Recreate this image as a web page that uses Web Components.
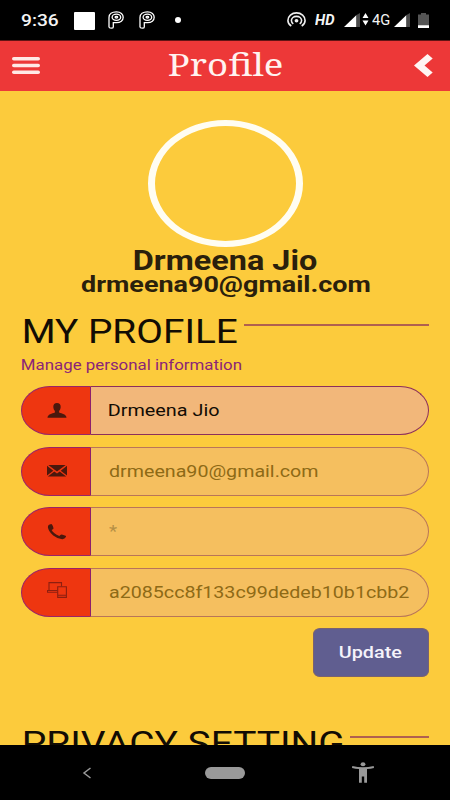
<!DOCTYPE html>
<html lang="en">
<head>
<meta charset="utf-8">
<title>Profile</title>
<style>
  html, body {
    margin: 0;
    height: 100%;
  }
  body {
    background: #fccb3c;
    font-family: Roboto, "Liberation Sans", sans-serif;
    overflow: hidden;
  }
</style>
</head>
<body>
<profile-app></profile-app>

<script>
/**
 * FitText - one line of text, scaled horizontally so that its visible
 * glyphs span exactly `width` pixels
 */
class FitText extends HTMLElement {
  constructor() {
    super();
    this.attachShadow({ mode: 'open' });
    this.shadowRoot.innerHTML = `
      <style>
        :host {
          display: block;
          flex: none;
          text-align: left;
          white-space: nowrap;
        }
        span {
          display: inline-block;
          vertical-align: top;
          transform-origin: 0 50%;
        }
      </style>
      <span><slot></slot></span>
    `;
  }

  connectedCallback() {
    const target = parseFloat(this.getAttribute('width'));
    const css = getComputedStyle(this);
    const ctx = document.createElement('canvas').getContext('2d');
    ctx.font = `${css.fontStyle} ${css.fontWeight} ${css.fontSize} ${css.fontFamily}`;

    const m = ctx.measureText(this.textContent);
    const ink = m.actualBoundingBoxRight + m.actualBoundingBoxLeft;
    const scale = target / ink;
    const span = this.shadowRoot.querySelector('span');

    this.style.width = `${target}px`;
    span.style.transform = `translateX(${m.actualBoundingBoxLeft * scale}px) scaleX(${scale})`;
  }
}

/**
 * StatusBar - clock, notification icons and signal icons
 */
class StatusBar extends HTMLElement {
  constructor() {
    super();
    this.attachShadow({ mode: 'open' });
    this.shadowRoot.innerHTML = `
      <style>
        :host {
          display: flex;
          align-items: center;
          box-sizing: border-box;
          height: 40px;
          padding: 0 21px;
          background: #000;
          color: #f4f4f4;
        }
        svg {
          display: block;
          flex: none;
        }
        .time {
          font-size: 17px;
          font-weight: 500;
          line-height: 42px;
        }
        .square {
          width: 21px;
          height: 18px;
          margin: 1px 13px 0 16px;
          border-radius: 1px;
          background: #fff;
        }
        .p {
          margin-right: 15px;
        }
        .dot {
          width: 6px;
          height: 6px;
          margin-left: 5px;
          border-radius: 50%;
          background: #fff;
        }
        .right {
          display: flex;
          align-items: center;
          margin-left: auto;
        }
        .hd {
          margin: 0 9px 0 9px;
          font-size: 15px;
          font-weight: 700;
          font-style: italic;
          line-height: 41px;
        }
        .net {
          margin: 0 4px 0 3px;
          font-size: 15px;
          line-height: 41px;
        }
        .battery {
          margin-left: 8px;
        }
      </style>
      <fit-text class="time" width="37">9:36</fit-text>
      <div class="square"></div>
      <svg class="p" width="16" height="18" viewBox="0 0 16 18" fill="none" stroke="#fff" stroke-width="1.3">
        <path d="M1 16V6.500C1 3 4 .9 8.400.9s6.800 2.200 6.800 5.400-2.700 5.400-6.800 5.400H5.300V16q0 1.200-2.100 1.200T1 16z"/>
        <ellipse cx="8.400" cy="6.300" rx="4.300" ry="3.100"/>
        <ellipse cx="8.400" cy="6.300" rx="1.300" ry=".8"/>
      </svg>
      <svg class="p" width="16" height="18" viewBox="0 0 16 18" fill="none" stroke="#fff" stroke-width="1.3">
        <path d="M1 16V6.500C1 3 4 .9 8.400.9s6.800 2.200 6.800 5.400-2.700 5.400-6.800 5.400H5.300V16q0 1.200-2.100 1.200T1 16z"/>
        <ellipse cx="8.400" cy="6.300" rx="4.300" ry="3.100"/>
        <ellipse cx="8.400" cy="6.300" rx="1.300" ry=".8"/>
      </svg>
      <div class="dot"></div>
      <div class="right">
        <svg width="19" height="16" viewBox="0 0 19 16" fill="none" stroke="#eee" stroke-width="1.600">
          <path d="M4.300 14C2.200 12.700.9 10.700.9 8.500.9 4.300 4.700.9 9.500.9s8.600 3.400 8.600 7.600c0 2.200-1.300 4.200-3.400 5.500"/>
          <path d="M6.300 11.800C5.100 11 4.400 9.900 4.400 8.600c0-2.300 2.300-4.200 5.100-4.200s5.100 1.900 5.100 4.200c0 1.300-.7 2.400-1.900 3.200"/>
          <ellipse cx="9.500" cy="8.800" rx="1.900" ry="1.700" fill="#eee" stroke="none"/>
        </svg>
        <fit-text class="hd" width="20">HD</fit-text>
        <svg width="16" height="14" viewBox="0 0 16 14">
          <path d="M0 14L12.500 2V14z" fill="#fff"/>
          <path d="M12.500 2L16 0V14H12.500z" fill="#4a4a4a"/>
        </svg>
        <svg width="7" height="13" viewBox="0 0 7 13" fill="#fff" style="margin: 0 0 2px 2px">
          <path d="M3.500 0L6.500 5H.5zM3.500 12.500L.5 7.500H6.500z"/>
        </svg>
        <fit-text class="net" width="18">4G</fit-text>
        <svg width="16" height="14" viewBox="0 0 16 14">
          <path d="M0 14L12.500 2V14z" fill="#fff"/>
          <path d="M12.500 2L16 0V14H12.500z" fill="#4a4a4a"/>
        </svg>
        <svg class="battery" width="11" height="15" viewBox="0 0 11 15">
          <path d="M3 0h5v1.500h3V12.500H0V1.500h3z" fill="#555"/>
          <path d="M0 12.200H11V15H0z" fill="#fff"/>
        </svg>
      </div>
    `;
  }
}

/**
 * AppHeader - red title bar with menu and back buttons
 */
class AppHeader extends HTMLElement {
  constructor() {
    super();
    this.attachShadow({ mode: 'open' });
    this.shadowRoot.innerHTML = `
      <style>
        :host {
          display: grid;
          grid-template-columns: 1fr auto 1fr;
          align-items: center;
          box-sizing: border-box;
          height: 51px;
          padding: 0 17px 0 12px;
          border-top: 1px solid #611414;
          background: #ed3838;
          color: #fff3f0;
        }
        svg {
          display: block;
        }
        .menu {
          margin-bottom: 2px;
        }
        .title {
          margin: 0 0 3px 5px;
          font-family: "Noto Serif", "DejaVu Serif", serif;
          font-size: 30px;
          line-height: 47px;
        }
        .back {
          justify-self: end;
          margin-bottom: 2px;
        }
      </style>
      <svg class="menu" width="28" height="17" viewBox="0 0 28 17" fill="#ffe9e6">
        <rect width="28" height="3.600" rx="1.800"/>
        <rect y="6.700" width="28" height="3.600" rx="1.800"/>
        <rect y="13.400" width="28" height="3.600" rx="1.800"/>
      </svg>
      <fit-text class="title" width="113">${this.getAttribute('label')}</fit-text>
      <svg class="back" width="19" height="23" viewBox="0 0 19 23">
        <path d="M13.500 0L18.700 4.500 10.500 11.500 18.700 18.500 13.500 23 0 11.500z" fill="#fff5f3"/>
      </svg>
    `;
  }
}

/**
 * SectionHeading - big title followed by a rule that fills the row
 */
class SectionHeading extends HTMLElement {
  constructor() {
    super();
    this.attachShadow({ mode: 'open' });
    this.shadowRoot.innerHTML = `
      <style>
        :host {
          display: flex;
          gap: 7px;
          height: 34px;
          padding-left: 3px;
          color: #120c04;
          font-size: 33px;
          line-height: 34px;
        }
        hr {
          flex: 1;
          height: 2px;
          margin: 9px 0 0;
          border: 0;
          background: #b0604f;
        }
      </style>
      <slot></slot>
      <hr>
    `;
  }
}

const ICONS = {
  user: `<path d="M10 0c2.400 0 3.800 1.600 3.700 4-.1 1.900-.9 3.200-1.600 4.100v1.500c2.800 1 7.400 1.900 7.400 5.200H.5C.5 11.500 5.100 10.600 7.900 9.600V8.100C7.200 7.200 6.400 5.900 6.300 4 6.200 1.600 7.600 0 10 0z"/>`,
  mail: `<path d="M1.300 2H18.700L10 8.500zM0 2.800L6.300 7.700 0 12.400zM20 2.800L13.700 7.700 20 12.400zM7.300 8.500L10 10.500 12.700 8.500 19.200 13.400H.8z"/>`,
  phone: `<path d="M2 .7L4.300 0Q5 .1 5.700 1.800T6.500 4.400Q6.300 5 4.600 6.100 6.500 9.600 12.300 12 14 10.600 14.800 10.600L18.600 11.800Q19.300 12.200 18.900 13.100 17.700 15.300 15.200 15.200 10.700 15 6.200 11.500 1.400 7.500.9 3.300.8 1.600 2 .7z"/>`,
  devices: `<g fill="none" stroke="#8d1f10" stroke-width="1.100"><path d="M10.500 8.500H2V.6H14.500V4.500M10.500 8.500H.5V10.300H10.500"/><path d="M10.700 4.800H19.400V15.400H10.700zM10.700 13.200H19.400"/></g>`
};

/**
 * ProfileField - pill-shaped input with an icon on its left
 */
class ProfileField extends HTMLElement {
  constructor() {
    super();
    this.attachShadow({ mode: 'open' });
    this.shadowRoot.innerHTML = `
      <style>
        :host {
          display: flex;
          height: 49px;
          line-height: 48px;
          font-size: 16.500px;
          color: #8e6a16;
        }
        .icon {
          display: flex;
          align-items: center;
          justify-content: center;
          box-sizing: border-box;
          width: 70px;
          padding-left: 1px;
          border: 1px solid #9a2468;
          border-right: 1.500px solid #8c1e6c;
          border-radius: 29px 0 0 29px / 24.500px 0 0 24.500px;
          background: #ee3610;
        }
        svg {
          display: block;
          fill: #4b180d;
        }
        .value {
          display: flex;
          flex: 1;
          box-sizing: border-box;
          padding-left: 17.500px;
          border: 1px solid #b97559;
          border-left: 0;
          border-radius: 0 29px 29px 0 / 0 24.500px 24.500px 0;
          background: #f5bf5f;
        }
        :host([active]) {
          color: #120c04;
        }
        :host([active]) .value {
          border-color: #8c2f5c;
          background: #f2b77a;
        }
        :host([icon="devices"]) svg {
          margin-bottom: 5px;
        }
      </style>
      <div class="icon">
        <svg width="20" height="16" viewBox="0 0 20 16">${ICONS[this.getAttribute('icon')]}</svg>
      </div>
      <div class="value"><slot></slot></div>
    `;
  }
}

/**
 * NavBar - back, home and accessibility buttons of the phone
 */
class NavBar extends HTMLElement {
  constructor() {
    super();
    this.attachShadow({ mode: 'open' });
    this.shadowRoot.innerHTML = `
      <style>
        :host {
          display: flex;
          align-items: center;
          justify-content: space-between;
          box-sizing: border-box;
          height: 55px;
          padding: 0 76px 0 82px;
          background: #000;
        }
        svg {
          display: block;
        }
        .home {
          width: 40px;
          height: 12px;
          margin-left: 6px;
          border-radius: 6px;
          background: #999;
        }
      </style>
      <svg width="10" height="12" viewBox="0 0 10 12" fill="none" stroke="#999" stroke-width="1.500">
        <path d="M8.500 1L2 6 8.500 11"/>
      </svg>
      <div class="home"></div>
      <svg width="22" height="21" viewBox="0 0 22 21" fill="#999">
        <ellipse cx="11" cy="2.200" rx="2.400" ry="2"/>
        <path d="M.3 4Q11 6.600 21.700 4L22 5.900Q18.500 6.800 15 7.100V20.700H12.200V14.400H9.800V20.700H7V7.100Q3.500 6.800 0 5.900z"/>
      </svg>
    `;
  }
}

/**
 * ProfileApp - the whole profile page
 */
class ProfileApp extends HTMLElement {
  constructor() {
    super();
    this.attachShadow({ mode: 'open' });
    this.shadowRoot.innerHTML = `
      <style>
        :host {
          display: flex;
          flex-direction: column;
          height: 100vh;
        }
        main {
          flex: 1;
          min-height: 0;
          box-sizing: border-box;
          padding: 29px 21.500px 0 21px;
          overflow: hidden;
          background: #fccb3c;
        }
        .card {
          display: flex;
          flex-direction: column;
          align-items: center;
          padding-left: 1px;
          color: #2a200c;
          font-weight: 700;
        }
        .avatar {
          box-sizing: border-box;
          width: 155px;
          height: 127px;
          margin-bottom: 2px;
          border: 6.500px solid #fffdf2;
          border-width: 6px 7px;
          border-radius: 50%;
        }
        .name {
          font-size: 27px;
          line-height: 25px;
        }
        .email {
          font-size: 21.500px;
          line-height: 21px;
        }
        .first {
          margin-top: 20px;
        }
        .hint {
          margin: 9px 0 12px 1px;
          font-size: 14.500px;
          line-height: 16px;
          color: #8a2478;
        }
        .fields {
          display: grid;
          gap: 11.500px;
        }
        .actions {
          display: flex;
          justify-content: flex-end;
          margin: 11px 0 50px;
        }
        button {
          display: flex;
          align-items: center;
          justify-content: center;
          box-sizing: border-box;
          width: 116px;
          height: 49px;
          padding: 0 0 0 1px;
          border: 1px solid #7a6270;
          border-radius: 7px / 6px;
          background: #605e90;
          color: #f5f3fa;
          font: 500 16.500px/47px Roboto, "Liberation Sans", sans-serif;
        }
      </style>
      <status-bar></status-bar>
      <app-header label="Profile"></app-header>
      <main>
        <div class="card">
          <div class="avatar"></div>
          <fit-text class="name" width="183">Drmeena Jio</fit-text>
          <fit-text class="email" width="289">drmeena90@gmail.com</fit-text>
        </div>
        <section-heading class="first"><fit-text width="213">MY PROFILE</fit-text></section-heading>
        <fit-text class="hint" width="220">Manage personal information</fit-text>
        <div class="fields">
          <profile-field icon="user" active><fit-text width="110">Drmeena Jio</fit-text></profile-field>
          <profile-field icon="mail"><fit-text width="209">drmeena90@gmail.com</fit-text></profile-field>
          <profile-field icon="phone"><fit-text width="8" style="color: #b58f45">*</fit-text></profile-field>
          <profile-field icon="devices"><fit-text width="300">a2085cc8f133c99dedeb10b1cbb2</fit-text></profile-field>
        </div>
        <div class="actions">
          <button type="button"><fit-text width="62">Update</fit-text></button>
        </div>
        <section-heading><fit-text width="319">PRIVACY SETTING</fit-text></section-heading>
      </main>
      <nav-bar></nav-bar>
    `;
  }
}

// Register the custom elements, small parts first
customElements.define('fit-text', FitText);
customElements.define('status-bar', StatusBar);
customElements.define('app-header', AppHeader);
customElements.define('section-heading', SectionHeading);
customElements.define('profile-field', ProfileField);
customElements.define('nav-bar', NavBar);
customElements.define('profile-app', ProfileApp);
</script>
</body>
</html>
